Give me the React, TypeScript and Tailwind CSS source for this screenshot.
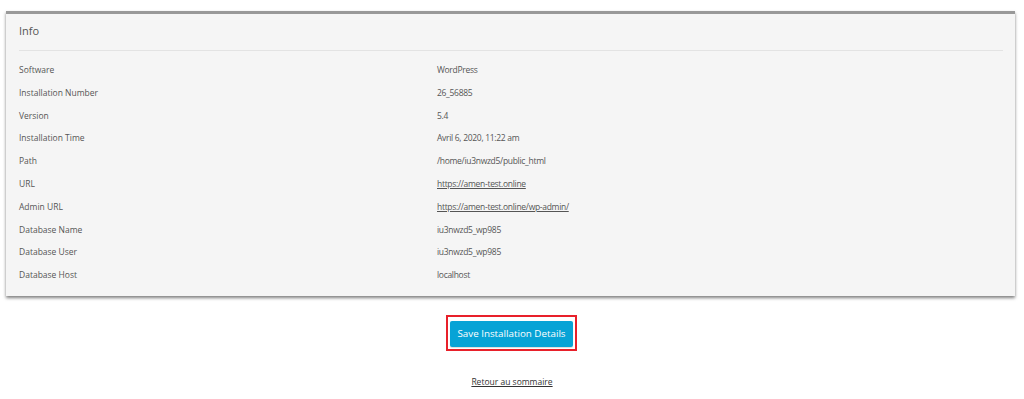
import React from 'react';

const rows: { label: string; value: string; link?: boolean }[] = [
  { label: 'Software', value: 'WordPress' },
  { label: 'Installation Number', value: '26_56885' },
  { label: 'Version', value: '5.4' },
  { label: 'Installation Time', value: 'Avril 6, 2020, 11:22 am' },
  { label: 'Path', value: '/home/iu3nwzd5/public_html' },
  { label: 'URL', value: 'https://amen-test.online', link: true },
  { label: 'Admin URL', value: 'https://amen-test.online/wp-admin/', link: true },
  { label: 'Database Name', value: 'iu3nwzd5_wp985' },
  { label: 'Database User', value: 'iu3nwzd5_wp985' },
  { label: 'Database Host', value: 'localhost' },
];

export default function App() {
  return (
    <div className="w-[1024px] h-[399px] bg-white pt-[11px] font-['Open_Sans',sans-serif] text-[#555]">
      {/* Info card */}
      <div className="ml-[6px] w-[1009px] h-[285px] bg-[#f5f5f5] border-t-[3px] border-[#999] shadow-[0_2px_3px_rgba(0,0,0,0.5)] px-[13px]">
        <div className="h-[36px] pb-[2px] flex items-center text-[11px] text-[#555]">Info</div>
        <div className="border-t border-[#e3e3e3] w-[984px]" />
        <div className="pt-[8px]">
          {rows.map((r) => (
            <div key={r.label} className="flex items-center h-[22.8px] text-[8.5px]">
              <div className="w-[418px]">{r.label}</div>
              <div className={r.link ? 'underline tracking-[-0.3px]' : 'tracking-[-0.3px]'}>{r.value}</div>
            </div>
          ))}
        </div>
      </div>

      {/* Save button */}
      <div className="flex justify-center mt-[19px]">
        <div className="ml-[-1px] border-2 border-[#e8202a] p-[2px]">
          <button className="w-[123px] h-[26px] bg-[#07a3d6] rounded-[2px] text-white text-[9.8px] shadow-[0_1px_1px_rgba(0,0,0,0.15)]">
            Save Installation Details
          </button>
        </div>
      </div>

      {/* Back link */}
      <div className="flex justify-center mt-[25px]">
        <a className="underline text-[#333] text-[8.5px]" href="#">Retour au sommaire</a>
      </div>
    </div>
  );
}
